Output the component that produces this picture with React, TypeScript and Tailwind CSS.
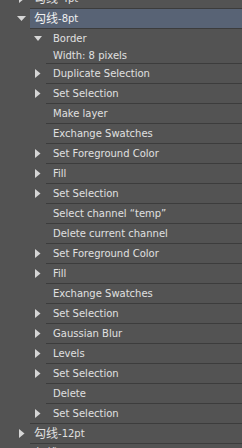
import React from "react";

const FONT = '"DejaVu Sans", "Noto Sans CJK SC", sans-serif';

function RightTri({ className = "" }: { className?: string }) {
  return (
    <svg width="6" height="9" viewBox="0 0 6 9" className={className}>
      <polygon points="0,0 0,9 5.5,4.5" fill="#d6d6d6" />
    </svg>
  );
}

function DownTri({ w = 9, h = 5 }: { w?: number; h?: number }) {
  return (
    <svg width={w} height={h} viewBox={`0 0 ${w} ${h}`}>
      <polygon points={`0,0 ${w},0 ${w / 2},${h}`} fill="#d6d6d6" />
    </svg>
  );
}

function TopRow({
  num,
  expanded = false,
  selected = false,
}: {
  num: string;
  expanded?: boolean;
  selected?: boolean;
}) {
  return (
    <div className="flex flex-col">
      <div className="flex h-[19px]">
        <div className="w-[30px] flex items-center">
          {expanded ? (
            <div className="ml-[17px] mt-[-1px] flex">
              <DownTri w={9} h={5} />
            </div>
          ) : (
            <div className="ml-[19px] flex">
              <RightTri />
            </div>
          )}
        </div>
        <div
          className={
            "flex-1 flex items-center pl-[4px] text-[10px] " +
            (selected ? "bg-[#586375] text-[#f0f0f0]" : "text-[#e0e0e0]")
          }
        >
          <span className="text-[12px] leading-none">勾线</span>
          <span className="leading-none">-{num}pt</span>
        </div>
      </div>
      <div className="h-px ml-[30px] bg-[#3c3c3c]" />
    </div>
  );
}

function SubRow({
  label,
  arrow,
  last = false,
}: {
  label: string;
  arrow: boolean;
  last?: boolean;
}) {
  return (
    <div className="flex flex-col">
      <div className="flex h-[19px]">
        <div className="w-[46px] flex items-center">
          {arrow && (
            <div className="ml-[35px] flex">
              <RightTri />
            </div>
          )}
        </div>
        <div className="flex-1 flex items-center pl-[7px] text-[10px] text-[#e0e0e0] whitespace-nowrap">
          {label}
        </div>
      </div>
      <div className={"h-px bg-[#3c3c3c] " + (last ? "ml-[30px]" : "ml-[46px]")} />
    </div>
  );
}

const subs: { label: string; arrow: boolean }[] = [
  { label: "Duplicate Selection", arrow: true },
  { label: "Set Selection", arrow: true },
  { label: "Make layer", arrow: false },
  { label: "Exchange Swatches", arrow: false },
  { label: "Set Foreground Color", arrow: true },
  { label: "Fill", arrow: true },
  { label: "Set Selection", arrow: true },
  { label: "Select channel “temp”", arrow: false },
  { label: "Delete current channel", arrow: false },
  { label: "Set Foreground Color", arrow: true },
  { label: "Fill", arrow: true },
  { label: "Exchange Swatches", arrow: false },
  { label: "Set Selection", arrow: true },
  { label: "Gaussian Blur", arrow: true },
  { label: "Levels", arrow: true },
  { label: "Set Selection", arrow: true },
  { label: "Delete", arrow: false },
  { label: "Set Selection", arrow: true },
];

export default function App() {
  return (
    <div
      className="w-[242px] h-[448px] overflow-hidden bg-[#535353] select-none"
      style={{ fontFamily: FONT }}
    >
      <div className="mt-[-11px] flex flex-col">
        <TopRow num="4" />
        <TopRow num="8" expanded selected />
        {/* Border step with detail */}
        <div className="flex flex-col">
          <div className="flex h-[19px]">
            <div className="w-[46px] flex items-center">
              <div className="ml-[34px] flex">
                <DownTri w={8} h={5} />
              </div>
            </div>
            <div className="flex-1 flex items-center pl-[7px] text-[10px] text-[#e0e0e0]">
              Border
            </div>
          </div>
          <div className="flex h-[15px]">
            <div className="w-[46px]" />
            <div className="flex-1 flex items-center pl-[7px] text-[10px] text-[#e0e0e0]">
              Width: 8 pixels
            </div>
          </div>
          <div className="h-px ml-[46px] bg-[#3c3c3c]" />
        </div>
        {subs.map((s, i) => (
          <SubRow key={i} label={s.label} arrow={s.arrow} last={i === subs.length - 1} />
        ))}
        <TopRow num="12" />
        <TopRow num="16" />
      </div>
    </div>
  );
}
